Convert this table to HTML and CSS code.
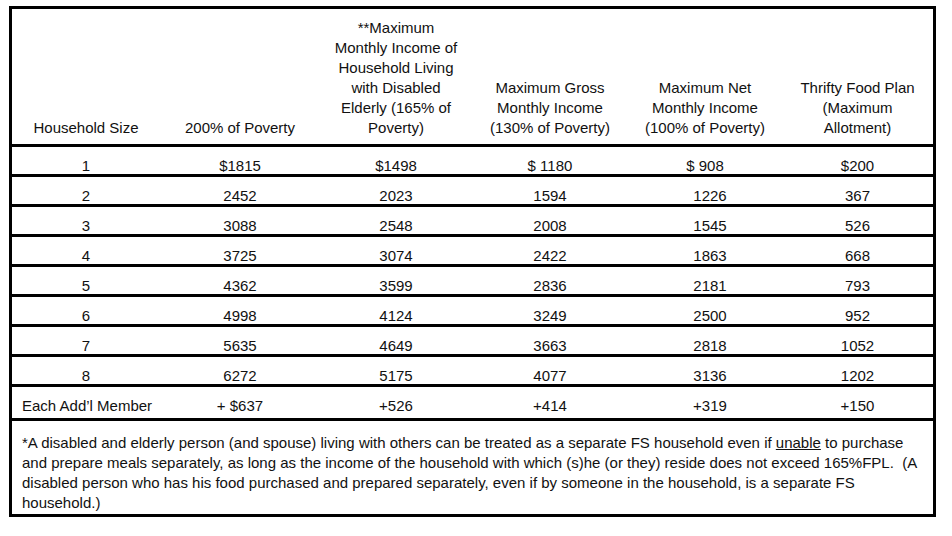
FILE: index.html
```html
<!DOCTYPE html>
<html>
<head>
<meta charset="utf-8">
<link rel="stylesheet" href="styles.css">
</head>
<body>
<div class="page">
<table class="fs-table">
  <colgroup>
    <col class="c1"><col class="c2"><col class="c3"><col class="c4"><col class="c5"><col class="c6">
  </colgroup>
  <thead>
    <tr>
      <th>Household Size</th>
      <th>200% of Poverty</th>
      <th>**Maximum<br>Monthly Income of<br>Household Living<br>with Disabled<br>Elderly (165% of<br>Poverty)</th>
      <th>Maximum Gross<br>Monthly Income<br>(130% of Poverty)</th>
      <th>Maximum Net<br>Monthly Income<br>(100% of Poverty)</th>
      <th>Thrifty Food Plan<br>(Maximum<br>Allotment)</th>
    </tr>
  </thead>
  <tbody>
    <tr><td>1</td><td>$1815</td><td>$1498</td><td>$ 1180</td><td>$ 908</td><td>$200</td></tr>
    <tr><td>2</td><td>2452</td><td>2023</td><td>1594</td><td class="nudge">1226</td><td>367</td></tr>
    <tr><td>3</td><td>3088</td><td>2548</td><td>2008</td><td class="nudge">1545</td><td>526</td></tr>
    <tr><td>4</td><td>3725</td><td>3074</td><td>2422</td><td class="nudge">1863</td><td>668</td></tr>
    <tr><td>5</td><td>4362</td><td>3599</td><td>2836</td><td class="nudge">2181</td><td>793</td></tr>
    <tr><td>6</td><td>4998</td><td>4124</td><td>3249</td><td class="nudge">2500</td><td>952</td></tr>
    <tr><td>7</td><td>5635</td><td>4649</td><td>3663</td><td class="nudge">2818</td><td>1052</td></tr>
    <tr><td>8</td><td>6272</td><td>5175</td><td>4077</td><td class="nudge">3136</td><td>1202</td></tr>
    <tr class="addl"><td class="left">Each Add’l Member</td><td>+ $637</td><td>+526</td><td>+414</td><td class="nudge">+319</td><td>+150</td></tr>
    <tr class="note">
      <td colspan="6">*A disabled and elderly person (and spouse) living with others can be treated as a separate FS household even if <u>unable</u> to purchase<br>and prepare meals separately, as long as the income of the household with which (s)he (or they) reside does not exceed 165%FPL.&nbsp; (A<br>disabled person who has his food purchased and prepared separately, even if by someone in the household, is a separate FS<br>household.)</td>
    </tr>
  </tbody>
</table>
</div>
</body>
</html>
```

FILE: styles.css
```css
html, body {
  margin: 0;
  padding: 0;
  background: #ffffff;
}

.page {
  padding: 6px 0 0 9px;
}

.fs-table {
  width: 927px;
  table-layout: fixed;
  border-collapse: separate;
  border-spacing: 0;
  border-top: 3px solid #000;
  border-left: 3px solid #000;
  border-right: 3px solid #000;
  font-family: "Liberation Sans", Arial, sans-serif;
  font-size: 15px;
  color: #111111;
}

.c1 { width: 148px; }
.c2 { width: 160px; }
.c3 { width: 152px; }
.c4 { width: 156px; }
.c5 { width: 154px; }
.c6 { width: 151px; }

.fs-table th {
  font-weight: normal;
  text-align: center;
  vertical-align: bottom;
  line-height: 20px;
  height: 129px;
  padding: 0 0 6px 0;
  border-bottom: 3px solid #000;
}

.fs-table td {
  text-align: center;
  vertical-align: bottom;
  line-height: 15px;
  height: 26px;
  padding: 0 0 1px 0;
  border-bottom: 3px solid #000;
}

.fs-table td.nudge {
  padding-left: 10px;
}

.fs-table tr.addl td {
  height: 29px;
  line-height: 20px;
  padding-bottom: 2px;
}

.fs-table td.left {
  text-align: left;
  padding-left: 10px;
}

.fs-table tr.note td {
  text-align: left;
  height: auto;
  line-height: 20px;
  padding: 12px 0 1px 10px;
  white-space: nowrap;
}
```
